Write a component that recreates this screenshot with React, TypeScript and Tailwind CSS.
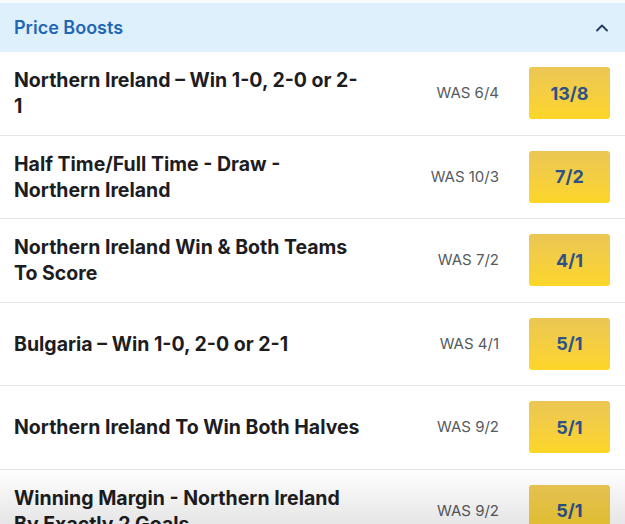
import { ChevronUp } from 'lucide-react';

interface Boost {
  title: string;
  was: string;
  price: string;
}

const boosts: Boost[] = [
  { title: 'Northern Ireland – Win 1-0, 2-0 or 2-1', was: 'WAS 6/4', price: '13/8' },
  { title: 'Half Time/Full Time - Draw - Northern Ireland', was: 'WAS 10/3', price: '7/2' },
  { title: 'Northern Ireland Win & Both Teams To Score', was: 'WAS 7/2', price: '4/1' },
  { title: 'Bulgaria – Win 1-0, 2-0 or 2-1', was: 'WAS 4/1', price: '5/1' },
  { title: 'Northern Ireland To Win Both Halves', was: 'WAS 9/2', price: '5/1' },
  { title: 'Winning Margin - Northern Ireland By Exactly 2 Goals', was: 'WAS 9/2', price: '5/1' },
];

const BoostRow = ({ title, was, price }: Boost) => (
  <div className="flex h-[83.5px] shrink-0 items-center border-b border-[#e6e6e6] pl-[14px] pr-[15px]">
    <div className="w-[346px] text-[19.5px] font-bold leading-[26px] text-[#1d1d1f]">{title}</div>
    <div className="ml-auto mr-[30px] text-[15px] text-[#555a60]">{was}</div>
    <button className="flex h-[52px] w-[81px] items-center justify-center rounded-[3px] bg-gradient-to-b from-[#ebc653] to-[#fdd626] text-[18px] font-bold text-[#2d5189]">
      {price}
    </button>
  </div>
);

export default function App() {
  return (
    <div className="relative flex h-[524px] w-[625px] flex-col overflow-hidden bg-white font-['Inter',sans-serif]">
      <div className="h-[3px] shrink-0 bg-[#f7fbfe]" />
      <div className="flex h-[49px] shrink-0 items-center justify-between bg-[#dff0fd] pl-[14px] pr-[13px]">
        <span className="text-[18px] font-semibold text-[#1f67b5]">Price Boosts</span>
        <ChevronUp size={20} strokeWidth={2.2} className="text-[#1e3a5c]" />
      </div>
      {boosts.map((b) => (
        <BoostRow key={b.title} {...b} />
      ))}
      <div className="pointer-events-none absolute bottom-0 left-0 h-[56px] w-full bg-gradient-to-b from-black/0 to-black/10" />
    </div>
  );
}
